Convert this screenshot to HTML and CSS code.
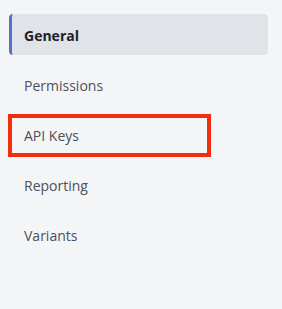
FILE: index.html
```html
<!DOCTYPE html>
<html lang="en">
  <head>
    <meta charset="UTF-8" />
    <meta name="viewport" content="width=device-width, initial-scale=1.0" />
    <title>Settings</title>
    <link rel="stylesheet" href="styles.css">
  </head>
  <body>
    <nav class="side-nav">
      <a href="#" class="nav-item active">General</a>
      <a href="#" class="nav-item">Permissions</a>
      <a href="#" class="nav-item highlighted">API Keys</a>
      <a href="#" class="nav-item">Reporting</a>
      <a href="#" class="nav-item">Variants</a>
    </nav>
  </body>
</html>
```

FILE: styles.css
```css
body {
  margin: 0;
  background: #f4f5f7;
  font-family: "Open Sans", "Noto Sans", sans-serif;
}

.side-nav {
  display: flex;
  flex-direction: column;
  gap: 9px;
  padding: 14px 14px 0 9px;
}

.nav-item {
  position: relative;
  display: flex;
  align-items: center;
  box-sizing: border-box;
  height: 41px;
  padding: 2px 0 0 15px;
  border-radius: 4px;
  color: #4b505b;
  font-size: 14px;
  text-decoration: none;
}

.nav-item.active {
  padding-left: 12px;
  border-left: 3px solid #5b6fc4;
  background: #e0e3e8;
  color: #1e2228;
  font-weight: 700;
}

.highlighted::after {
  content: "";
  position: absolute;
  left: -1px;
  top: 0;
  width: 195px;
  height: 35px;
  border: 4px solid #f42d0c;
}
```
